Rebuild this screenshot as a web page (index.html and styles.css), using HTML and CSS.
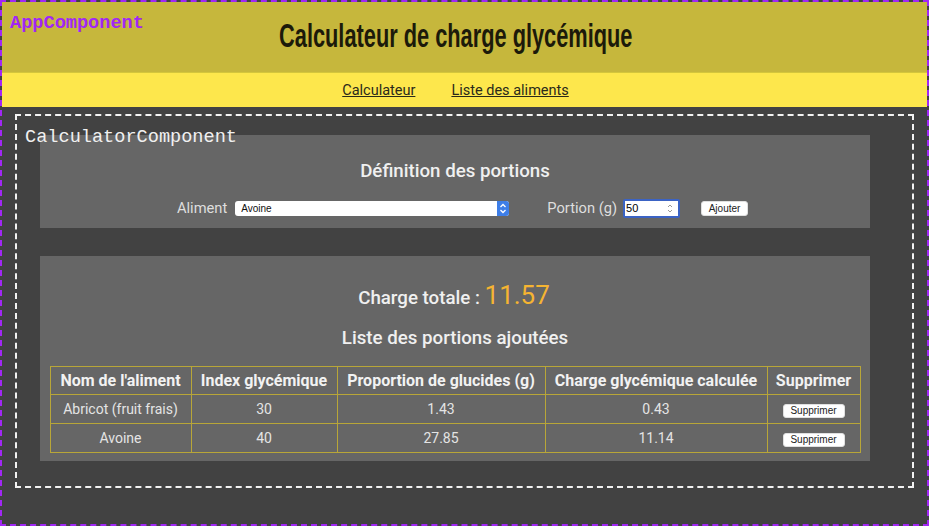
FILE: index.html
```html
<!DOCTYPE html>
<html lang="fr">
<head>
<meta charset="utf-8">
<title>Calculateur de charge glycémique</title>
<link rel="stylesheet" href="styles.css">
</head>
<body>
<div class="app">
  <span class="comp-label app-label">AppComponent</span>
  <header class="header">
    <h1 class="title">Calculateur de charge glycémique</h1>
  </header>
  <nav class="nav">
    <a href="#" class="nav-link">Calculateur</a>
    <a href="#" class="nav-link">Liste des aliments</a>
  </nav>
  <main class="main">
    <section class="calc">
      <span class="comp-label calc-label">CalculatorComponent</span>
      <div class="panel panel-def">
        <h2 class="panel-title">Définition des portions</h2>
        <div class="form-row">
          <label class="field-label">Aliment</label>
          <div class="select-wrap">
            <select class="select"><option>Avoine</option></select>
            <span class="select-arrow">
              <svg width="12" height="15" viewBox="0 0 12 15"><path d="M3.5 6 L6 3.5 L8.5 6 M3.5 9 L6 11.5 L8.5 9" fill="none" stroke="#fff" stroke-width="1.3"/></svg>
            </span>
          </div>
          <label class="field-label field-portion">Portion (g)</label>
          <div class="num-wrap">
            <input class="num" type="text" value="50">
            <span class="num-spin">
              <svg width="8" height="13" viewBox="0 0 8 13"><path d="M2 5 L4 3 L6 5 M2 8 L4 10 L6 8" fill="none" stroke="#999" stroke-width="1"/></svg>
            </span>
          </div>
          <button class="btn btn-add">Ajouter</button>
        </div>
      </div>
      <div class="panel panel-list">
        <p class="total">Charge totale : <span class="total-value">11.57</span></p>
        <h2 class="panel-title list-title">Liste des portions ajoutées</h2>
        <table class="table">
          <thead>
            <tr>
              <th class="c1">Nom de l'aliment</th>
              <th class="c2">Index glycémique</th>
              <th class="c3">Proportion de glucides (g)</th>
              <th class="c4">Charge glycémique calculée</th>
              <th class="c5">Supprimer</th>
            </tr>
          </thead>
          <tbody>
            <tr>
              <td>Abricot (fruit frais)</td>
              <td>30</td>
              <td>1.43</td>
              <td>0.43</td>
              <td><button class="btn btn-del">Supprimer</button></td>
            </tr>
            <tr>
              <td>Avoine</td>
              <td>40</td>
              <td>27.85</td>
              <td>11.14</td>
              <td><button class="btn btn-del">Supprimer</button></td>
            </tr>
          </tbody>
        </table>
      </div>
    </section>
  </main>
</div>
</body>
</html>
```

FILE: styles.css
```css
* { box-sizing: border-box; }
html, body { margin: 0; padding: 0; }
body {
  width: 929px;
  height: 526px;
  overflow: hidden;
  font-family: Roboto, "Liberation Sans", sans-serif;
  background: #424242;
}
.app {
  position: relative;
  width: 929px;
  height: 526px;
  border: 2px dashed #a127f5;
  display: flex;
  flex-direction: column;
  background: #424242;
}
.comp-label {
  position: absolute;
  font-family: "Liberation Mono", monospace;
  font-size: 18.6px;
  line-height: 18px;
  z-index: 2;
}
.app-label {
  top: 13px;
  left: 8px;
  color: #a127f5;
  font-weight: bold;
}
.header {
  height: 70px;
  background: #c6b73c;
  display: flex;
  justify-content: center;
  align-items: flex-start;
  padding-right: 18px;
}
.title {
  margin: 0;
  padding-top: 14px;
  font-family: "Liberation Sans Narrow", "Liberation Sans", sans-serif;
  font-weight: bold;
  font-size: 33px;
  line-height: 40px;
  color: #1c1a0a;
  transform: scaleX(0.66);
  white-space: nowrap;
}
.nav {
  height: 35px;
  background: #fde74c;
  display: flex;
  justify-content: center;
  align-items: center;
  gap: 36px;
  border-top: 1px solid #d4c63c;
  padding-right: 18px;
}
.nav-link {
  font-size: 14.5px;
  color: #2a2a1a;
  text-decoration: underline;
  padding-top: 1px;
}
.main {
  flex: 1;
  padding: 7px 13px 0 13px;
}
.calc {
  position: relative;
  height: 374px;
  border: 2px dashed #f2f2f2;
  padding: 19px 0 0 23px;
  display: flex;
  flex-direction: column;
  gap: 28px;
}
.calc-label {
  top: 13px;
  left: 8px;
  color: #f0f0f0;
}
.panel {
  width: 830px;
  background: #666666;
  display: flex;
  flex-direction: column;
  align-items: center;
}
.panel-def {
  height: 93px;
  padding-top: 24px;
}
.panel-title {
  margin: 0;
  font-size: 18.72px;
  font-weight: 500;
  line-height: 24px;
  color: #f0f0f0;
}
.form-row {
  margin-top: 15px;
  display: flex;
  align-items: center;
  height: 20px;
  margin-left: 15px;
}
.field-label {
  font-size: 14.7px;
  color: #dedede;
  margin-right: 8px;
}
.select-wrap {
  position: relative;
  width: 274px;
  height: 15px;
}
.select {
  appearance: none;
  -webkit-appearance: none;
  width: 274px;
  height: 15px;
  border: none;
  border-radius: 3px;
  background: #fff;
  font-family: "Liberation Sans", sans-serif;
  font-size: 10px;
  padding: 0 0 0 6px;
  color: #111;
  display: block;
}
.select-arrow {
  position: absolute;
  right: 0;
  top: 0;
  width: 12px;
  height: 15px;
  background: #3d7ee8;
  border-radius: 0 3px 3px 0;
  display: flex;
}
.field-portion { margin-left: 38px; margin-right: 6px; }
.num-wrap {
  position: relative;
  width: 57px;
  height: 19px;
  border: 2px solid #3b63c4;
  border-radius: 2px;
  background: #fff;
  display: flex;
  align-items: center;
  flex: none;
}
.num {
  width: 100%;
  height: 15px;
  border: none;
  outline: none;
  padding: 0 0 0 1px;
  font-family: "Liberation Sans", sans-serif;
  font-size: 11px;
  line-height: 15px;
  color: #000;
  background: transparent;
}
.num-spin {
  position: absolute;
  right: 4px;
  top: 1px;
  display: flex;
}
.btn {
  background: #fff;
  border: 1px solid #e0e0e0;
  border-radius: 3px;
  font-family: "Liberation Sans", sans-serif;
  color: #222;
  padding: 0;
}
.btn-add {
  margin-left: 21px;
  width: 47px;
  height: 15px;
  font-size: 10px;
  line-height: 13px;
}
.panel-list {
  height: 205px;
  padding-top: 25px;
}
.total {
  margin: 0;
  font-size: 18.72px;
  font-weight: 500;
  color: #f0f0f0;
  line-height: 28px;
  padding-right: 2px;
}
.total-value {
  font-size: 26px;
  font-weight: 400;
  color: #f5b432;
}
.list-title { margin-top: 14px; }
.table {
  margin-top: 16px;
  width: 811px;
  border-collapse: collapse;
  border: 1px solid #b8a638;
  color: #e4e4e4;
  font-size: 14px;
}
.table th, .table td {
  border: 1px solid #b8a638;
  text-align: center;
  padding: 0;
}
.table th {
  height: 28px;
  font-size: 16px;
  font-weight: bold;
  color: #f2f2f2;
}
.table td { height: 29px; }
.c1 { width: 141px; }
.c2 { width: 146px; }
.c3 { width: 208px; }
.c4 { width: 222px; }
.btn-del {
  width: 62px;
  height: 14px;
  font-size: 10px;
  line-height: 12px;
  margin-top: 1px;
}
```
